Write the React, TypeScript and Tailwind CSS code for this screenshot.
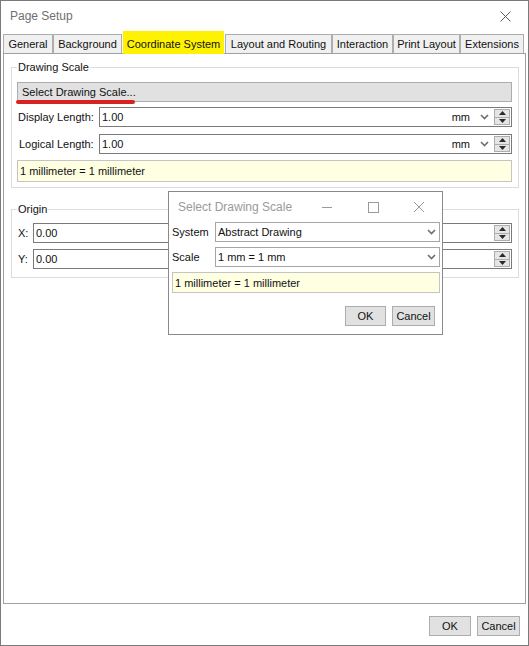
import React from 'react';

const tabs = [
  { label: 'General', w: 'w-[50px]' },
  { label: 'Background', w: 'w-[69px]' },
  { label: 'Coordinate System', w: 'w-[101px]', active: true },
  { label: 'Layout and Routing', w: 'w-[107px]' },
  { label: 'Interaction', w: 'w-[61px]' },
  { label: 'Print Layout', w: 'w-[67px]' },
  { label: 'Extensions', w: 'w-[64px]' },
];

function Chevron() {
  return (
    <svg width="9" height="6" viewBox="0 0 9 6" className="shrink-0">
      <polyline points="1,1 4.5,4.5 8,1" fill="none" stroke="#6e6e6e" strokeWidth="1.6" />
    </svg>
  );
}

function Spinner() {
  return (
    <div className="w-[16px] h-[16px] mr-[1px] shrink-0 border border-[#adadad] bg-[#e5e5e5] flex flex-col">
      <div className="flex-1 flex items-center justify-center">
        <svg width="7" height="4" viewBox="0 0 7 4">
          <polygon points="0,4 3.5,0 7,4" fill="#2a2a2a" />
        </svg>
      </div>
      <div className="flex-1 flex items-center justify-center border-t border-[#adadad]">
        <svg width="7" height="4" viewBox="0 0 7 4">
          <polygon points="0,0 7,0 3.5,4" fill="#2a2a2a" />
        </svg>
      </div>
    </div>
  );
}

function NumberInput({ value, unit }: { value: string; unit?: boolean }) {
  return (
    <div className="flex-1 h-[20px] border border-[#7a7a7a] bg-white flex items-center">
      <span className="pl-[2px] flex-1">{value}</span>
      {unit && (
        <>
          <span className="mr-[10px]">mm</span>
          <span className="mr-[5px] flex items-center"><Chevron /></span>
        </>
      )}
      <Spinner />
    </div>
  );
}

function Select({ value }: { value: string }) {
  return (
    <div className="flex-1 h-[20px] border border-[#a6a6a6] bg-white flex items-center">
      <span className="pl-[2px] flex-1">{value}</span>
      <span className="mr-[3px] flex items-center"><Chevron /></span>
    </div>
  );
}

function Button({ label, w }: { label: string; w: string }) {
  return (
    <button className={`${w} h-[20px] border border-[#adadad] bg-[#e1e1e1] flex items-center justify-center`}>
      {label}
    </button>
  );
}

function InfoBox({ text, h }: { text: string; h: string }) {
  return (
    <div className={`${h} border border-[#c4c4c4] bg-[#ffffe1] flex items-center pl-[2px]`}>{text}</div>
  );
}

export default function App() {
  return (
    <div className="relative w-[529px] h-[646px] border border-[#7a7a7a] bg-white text-[11px] leading-[14px] text-[#111] font-[family-name:'Liberation_Sans',Arial,sans-serif] flex flex-col">
      {/* title bar */}
      <div className="h-[30px] flex items-center justify-between pl-[9px] pr-[17px]">
        <span className="text-[12px] text-[#6f6f6f]">Page Setup</span>
        <svg width="11" height="11" viewBox="0 0 11 11">
          <line x1="0.5" y1="0.5" x2="10.5" y2="10.5" stroke="#5a5a5a" strokeWidth="1" />
          <line x1="10.5" y1="0.5" x2="0.5" y2="10.5" stroke="#5a5a5a" strokeWidth="1" />
        </svg>
      </div>

      {/* tabs */}
      <div className="h-[22px] flex items-end pl-[2px]">
        {tabs.map((t) =>
          t.active ? (
            <div
              key={t.label}
              className={`${t.w} h-[23px] -mb-px mx-px pt-[3px] relative z-10 bg-[#fff200] flex items-center justify-center`}
            >
              {t.label}
            </div>
          ) : (
            <div
              key={t.label}
              className={`${t.w} h-[19px] border border-b-0 border-[#adadad] bg-[#f0f0f0] flex items-center justify-center`}
            >
              {t.label}
            </div>
          )
        )}
      </div>

      {/* panel */}
      <div className="ml-[2px] w-[523px] h-[551px] border border-[#a0a0a0] bg-white">
        <fieldset className="ml-[7px] mr-[6px] mt-[6px] min-w-0 border border-[#dcdcdc] pl-[5px] pr-[6px] pt-[8px] pb-[5px]">
          <legend className="px-[1px] leading-[14px]">Drawing Scale</legend>
          <div className="relative">
            <button className="w-full h-[20px] border border-[#adadad] bg-[#e1e1e1] text-left pl-[4px]">
              Select Drawing Scale...
            </button>
            <div className="absolute left-[-1px] top-[18px] w-[119px] h-[4px] rounded-full bg-[#d6231d]" />
          </div>
          <div className="mt-[5px] flex items-center">
            <span className="w-[82px] pl-[1px]">Display Length:</span>
            <NumberInput value="1.00" unit />
          </div>
          <div className="mt-[7px] flex items-center">
            <span className="w-[82px] pl-[2px]">Logical Length:</span>
            <NumberInput value="1.00" unit />
          </div>
          <div className="mt-[6px]">
            <InfoBox text="1 millimeter = 1 millimeter" h="h-[22px]" />
          </div>
        </fieldset>

        <fieldset className="ml-[7px] mr-[6px] mt-[14px] min-w-0 border border-[#dcdcdc] pl-[5px] pr-[6px] pt-[7px] pb-[8px]">
          <legend className="px-[1px] leading-[14px]">Origin</legend>
          <div className="flex items-center">
            <span className="w-[16px] pl-[1px]">X:</span>
            <NumberInput value="0.00" />
          </div>
          <div className="mt-[6px] flex items-center">
            <span className="w-[16px] pl-[1px]">Y:</span>
            <NumberInput value="0.00" />
          </div>
        </fieldset>
      </div>

      {/* footer */}
      <div className="flex justify-end gap-[6px] pt-[12px] pr-[8px]">
        <Button label="OK" w="w-[42px]" />
        <Button label="Cancel" w="w-[43px]" />
      </div>

      {/* Select Drawing Scale dialog */}
      <div className="absolute left-[167px] top-[190px] w-[275px] h-[144px] border border-[#8a8a8a] bg-white flex flex-col">
        <div className="h-[30px] flex items-center">
          <span className="pl-[9px] flex-1 text-[12px] text-[#9a9a9a]">Select Drawing Scale</span>
          <div className="w-[46px] h-full flex items-center justify-center">
            <svg width="10" height="10" viewBox="0 0 10 10">
              <line x1="0" y1="5.5" x2="10" y2="5.5" stroke="#9a9a9a" strokeWidth="1" />
            </svg>
          </div>
          <div className="w-[46px] h-full flex items-center justify-center">
            <svg width="11" height="11" viewBox="0 0 11 11">
              <rect x="0.5" y="0.5" width="10" height="10" fill="none" stroke="#9a9a9a" strokeWidth="1" />
            </svg>
          </div>
          <div className="w-[46px] h-full flex items-center justify-center">
            <svg width="10" height="10" viewBox="0 0 10 10">
              <line x1="0" y1="0" x2="10" y2="10" stroke="#9a9a9a" strokeWidth="1" />
              <line x1="10" y1="0" x2="0" y2="10" stroke="#9a9a9a" strokeWidth="1" />
            </svg>
          </div>
        </div>
        <div className="pl-[3px] pr-[2px]">
          <div className="flex items-center">
            <span className="w-[43px]">System</span>
            <Select value="Abstract Drawing" />
          </div>
          <div className="mt-[5px] flex items-center">
            <span className="w-[43px]">Scale</span>
            <Select value="1 mm = 1 mm" />
          </div>
          <div className="mt-[5px]">
            <InfoBox text="1 millimeter = 1 millimeter" h="h-[21px]" />
          </div>
        </div>
        <div className="mt-[13px] flex justify-end gap-[6px] pr-[7px]">
          <Button label="OK" w="w-[41px]" />
          <Button label="Cancel" w="w-[43px]" />
        </div>
      </div>
    </div>
  );
}
